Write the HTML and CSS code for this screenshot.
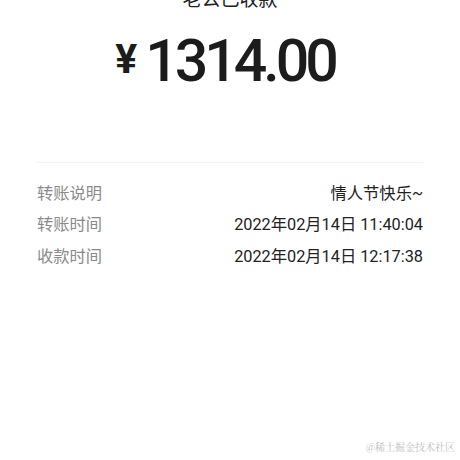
FILE: index.html
```html
<!doctype html>
<html lang="zh-CN">
    <head>
        <meta charset="utf-8">
        <title>收款详情</title>
        <link rel="stylesheet" href="styles.css">
    </head>
    <body>
        <div class="receipt">
            <div class="title">老公已收款</div>
            <div class="amount"><span class="yen">¥</span><span class="num">1314.00</span></div>

            <div class="divider"></div>

            <div class="rows">
                <div class="row">
                    <span class="label">转账说明</span>
                    <span class="value">情人节快乐~</span>
                </div>
                <div class="row">
                    <span class="label">转账时间</span>
                    <span class="value">2022年02月14日 11:40:04</span>
                </div>
                <div class="row">
                    <span class="label">收款时间</span>
                    <span class="value">2022年02月14日 12:17:38</span>
                </div>
            </div>
        </div>
        <div class="watermark">@稀土掘金技术社区</div>
    </body>
</html>
```

FILE: styles.css
```css
html, body {
    margin: 0;
    background: #fff;
}
body {
    width: 460px;
    height: 460px;
    position: relative;
    overflow: hidden;
    font-family: "Roboto", "Noto Sans CJK SC", sans-serif;
    color: #1c1c1c;
}
.receipt {
    padding: 0 37px;
}
.title {
    /* the header is scrolled off the top, only its lower half shows */
    margin-top: -14px;
    height: 28px;
    line-height: 28px;
    text-align: center;
    font-size: 19px;
    color: #222;
}
.amount {
    display: flex;
    justify-content: center;
    align-items: flex-start;
    margin-top: 16px;
    padding-right: 10px;
    height: 80px;
}
.yen {
    font-size: 41px;
    font-weight: 700;
    line-height: 40px;
    margin-top: 9px;
    margin-right: 8px;
}
.num {
    font-size: 59px;
    font-weight: 500;
    line-height: 62px;
    letter-spacing: -4px;
}
.divider {
    margin-top: 52px;
    height: 1px;
    background: #f2f2f2;
}
.rows {
    padding-top: 13px;
    display: flex;
    flex-direction: column;
}
.row {
    display: flex;
    justify-content: space-between;
    align-items: center;
    height: 31.5px;
    font-size: 16.3px;
}
.label {
    color: #8a8a8a;
}
.value {
    color: #222;
}
.watermark {
    position: absolute;
    right: 5px;
    bottom: 6px;
    font-family: "Noto Serif CJK SC", "Noto Sans CJK SC", serif;
    font-size: 10px;
    color: #bdbdbd;
}
```
